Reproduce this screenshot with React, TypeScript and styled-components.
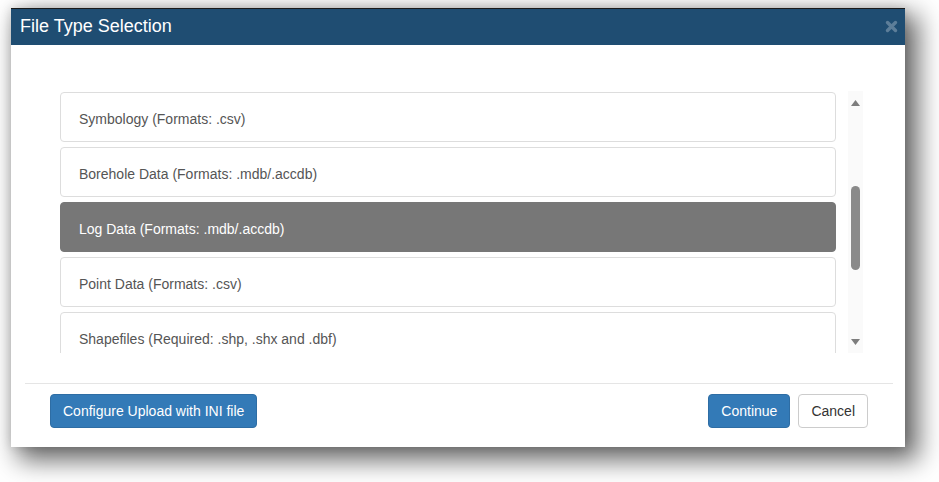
import React from "react";
import styled, { createGlobalStyle } from "styled-components";

const Global = createGlobalStyle`
  html, body { margin: 0; padding: 0; background: #ffffff; }
  body { font-family: "Liberation Sans", Arial, sans-serif; }
  * { box-sizing: border-box; }
`;

const Page = styled.div`
  width: 939px;
  height: 482px;
  padding: 8px 0 0 11px;
  background: #ffffff;
  overflow: hidden;
`;

const Dialog = styled.div`
  width: 894px;
  height: 439px;
  background: #ffffff;
  border-top: 1px solid #1a1a1a;
  display: flex;
  flex-direction: column;
  box-shadow: 10px 10px 24px 3px rgba(0, 0, 0, 0.6), 0 0 10px rgba(0, 0, 0, 0.14);
`;

const Header = styled.div`
  height: 36px;
  background: #1f4d72;
  display: flex;
  align-items: center;
  justify-content: space-between;
  padding: 0 7px 2px 9px;
`;

const Title = styled.h4`
  margin: 0;
  font-size: 18px;
  font-weight: 400;
  color: #ffffff;
  line-height: 20px;
`;

const Close = styled.button`
  border: 0;
  background: transparent;
  padding: 0;
  width: 13px;
  height: 13px;
  display: flex;
  cursor: pointer;
`;

const Body = styled.div`
  flex: 1;
  display: flex;
  flex-direction: column;
`;

const ListArea = styled.div`
  display: flex;
  height: 262px;
  margin: 46px 42px 0 49px;
`;

const List = styled.div`
  flex: 1;
  display: flex;
  flex-direction: column;
  gap: 5px;
  padding-top: 1px;
  overflow: hidden;
`;

const Item = styled.div<{ $active?: boolean }>`
  flex-shrink: 0;
  height: 50px;
  padding: 16px 18px 12px;
  border: 1px solid ${(p) => (p.$active ? "#777777" : "#dddddd")};
  border-radius: 4px;
  background: ${(p) => (p.$active ? "#777777" : "#ffffff")};
  color: ${(p) => (p.$active ? "#ffffff" : "#555555")};
  font-size: 14px;
  line-height: 20px;
  cursor: pointer;
`;

const Track = styled.div`
  width: 15px;
  margin-left: 12px;
  background: #fafafa;
  display: flex;
  flex-direction: column;
`;

const ArrowBtn = styled.div`
  height: 23px;
  display: flex;
  align-items: center;
  justify-content: center;
  flex-shrink: 0;
`;

const ThumbLane = styled.div`
  flex: 1;
  display: flex;
  flex-direction: column;
  align-items: center;
`;

const Thumb = styled.div`
  width: 9px;
  border-radius: 5px;
  background: #8a8a8a;
`;

const Footer = styled.div`
  margin: 30px 12px 0 14px;
  border-top: 1px solid #e5e5e5;
  padding: 10px 25px 19px 25px;
  display: flex;
  align-items: center;
`;

const Spacer = styled.div`
  flex: 1;
`;

const Button = styled.button<{ $variant: "primary" | "default" }>`
  height: 34px;
  padding: 6px 12px;
  font-family: "Liberation Sans", Arial, sans-serif;
  font-size: 14px;
  line-height: 20px;
  border-radius: 4px;
  border: 1px solid ${(p) => (p.$variant === "primary" ? "#2e6da4" : "#cccccc")};
  background: ${(p) => (p.$variant === "primary" ? "#337ab7" : "#ffffff")};
  color: ${(p) => (p.$variant === "primary" ? "#ffffff" : "#333333")};
  cursor: pointer;
  & + & {
    margin-left: 8px;
  }
`;

const items = [
  "Symbology (Formats: .csv)",
  "Borehole Data (Formats: .mdb/.accdb)",
  "Log Data (Formats: .mdb/.accdb)",
  "Point Data (Formats: .csv)",
  "Shapefiles (Required: .shp, .shx and .dbf)",
];

export default function App() {
  const selected = 2;
  const thumbOffset = 72;
  const thumbHeight = 84;
  return (
    <>
      <Global />
      <Page>
        <Dialog>
          <Header>
            <Title>File Type Selection</Title>
            <Close aria-label="Close">
              <svg width="13" height="13" viewBox="0 0 13 13">
                <path
                  d="M2.5 2.5 L10.5 10.5 M10.5 2.5 L2.5 10.5"
                  stroke="rgba(255,255,255,0.28)"
                  strokeWidth="3.4"
                  strokeLinecap="round"
                />
              </svg>
            </Close>
          </Header>
          <Body>
            <ListArea>
              <List>
                {items.map((t, i) => (
                  <Item key={t} $active={i === selected}>
                    {t}
                  </Item>
                ))}
              </List>
              <Track>
                <ArrowBtn>
                  <svg width="9" height="6" viewBox="0 0 9 6">
                    <path d="M4.5 0 L9 6 L0 6 Z" fill="#7d7d7d" />
                  </svg>
                </ArrowBtn>
                <ThumbLane>
                  <Thumb style={{ marginTop: thumbOffset, height: thumbHeight }} />
                </ThumbLane>
                <ArrowBtn>
                  <svg width="9" height="6" viewBox="0 0 9 6">
                    <path d="M0 0 L9 0 L4.5 6 Z" fill="#7d7d7d" />
                  </svg>
                </ArrowBtn>
              </Track>
            </ListArea>
            <Footer>
              <Button $variant="primary">Configure Upload with INI file</Button>
              <Spacer />
              <Button $variant="primary">Continue</Button>
              <Button $variant="default">Cancel</Button>
            </Footer>
          </Body>
        </Dialog>
      </Page>
    </>
  );
}
